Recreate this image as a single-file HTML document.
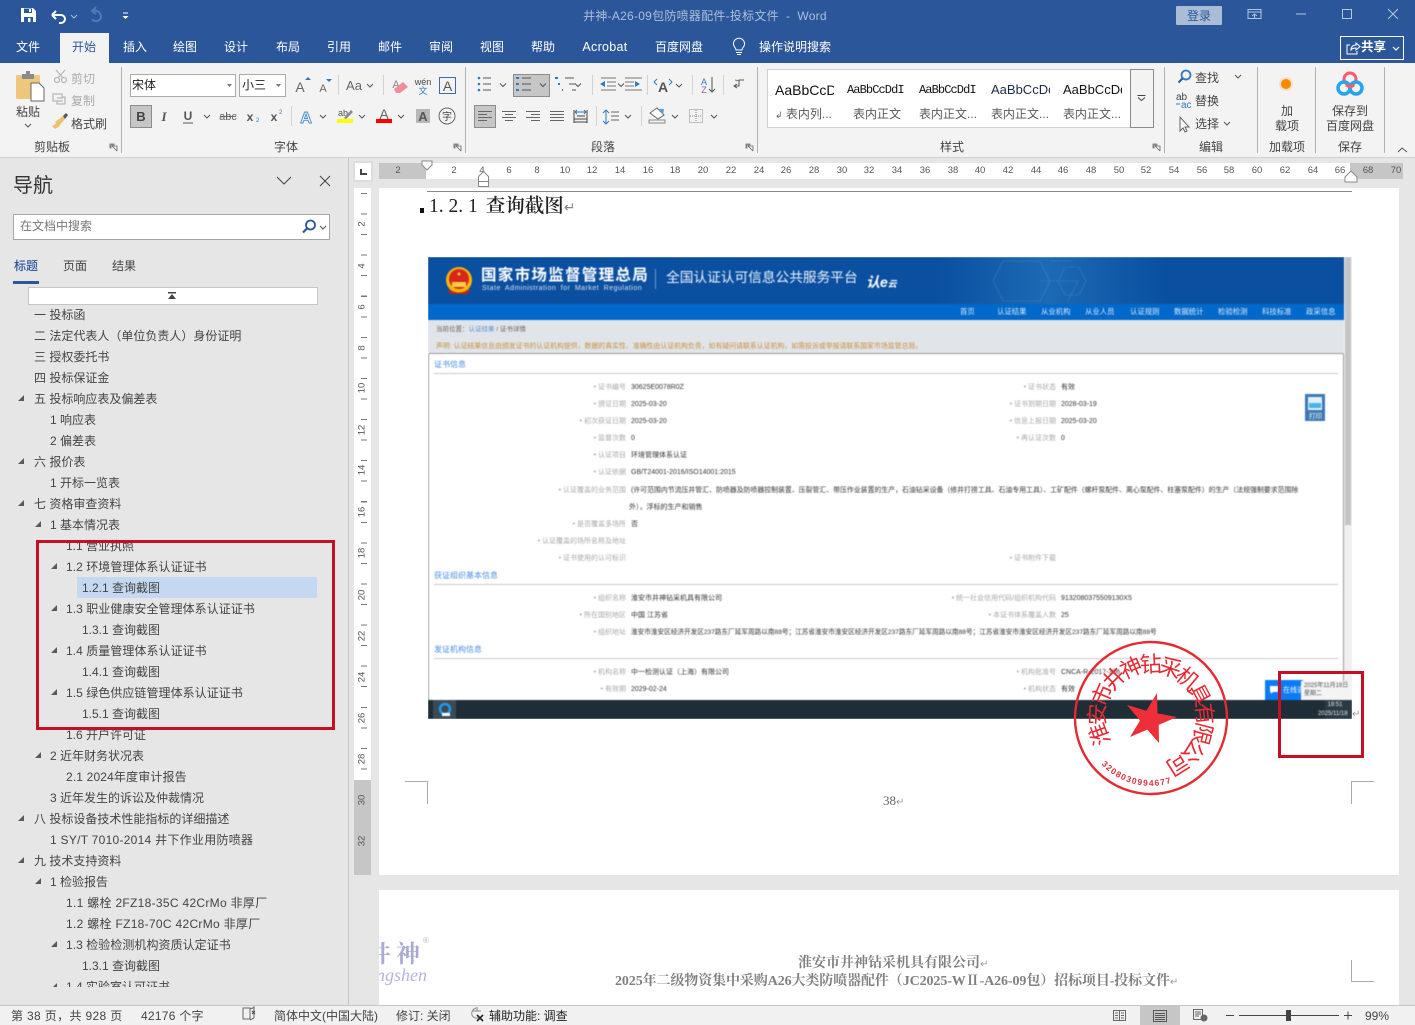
<!DOCTYPE html>
<html lang="zh-CN"><head><meta charset="utf-8"><title>井神-A26-09包防喷器配件-投标文件 - Word</title>
<style>
html,body{margin:0;padding:0;width:1415px;height:1025px;overflow:hidden;background:#e6e6e6}
body{position:relative;font-family:"Liberation Sans","Noto Sans CJK SC",sans-serif;font-size:12px;color:#444}
div,span,svg{position:absolute}
.t{white-space:nowrap;line-height:14px;height:14px}
.c{transform:translateX(-50%)}
.w{color:#fff}
.g{color:#ababab}
.b{background:#c6c6c6;border:1px solid #8c8c8c;box-sizing:border-box}
.sep{width:1px;background:#b1b1b1;top:67px;height:86px}
.ds{width:1px;background:#d2d2d2;height:20px}
.n{white-space:nowrap;line-height:20px;height:20px;font-size:12px;color:#444}
.a{width:6px;height:6px;background:#5a5a5a;clip-path:polygon(100% 0,100% 100%,0 100%)}
.hr span{top:2px;font-size:9.5px;color:#555;line-height:12px;transform:translateX(-50%)}
.vr span{left:0;width:17px;text-align:center;font-size:9.5px;color:#555;line-height:12px;transform:rotate(-90deg)}
.st{overflow:hidden;height:18px;line-height:18px;white-space:nowrap;color:#111}
.sl{color:#595959;font-size:12px;white-space:nowrap;line-height:14px}
#img{left:428px;top:257px;width:924px;height:462px;overflow:hidden;background:#fff}
#imgc{left:0;top:0;width:924px;height:462px;filter:blur(.45px)}
.l,.v{font-size:7px;line-height:9px;height:9px;white-space:nowrap}
.l{color:#a8a8a8;text-align:right}
.v{color:#333}
.h{font-size:8px;line-height:10px;color:#4a8fe0;white-space:nowrap;left:6px}
.hl{left:6px;width:904px;height:1px;background:#c8c8c8}
.m{top:50px;color:#dfeaf6;font-size:7.4px;line-height:10px;white-space:nowrap}
</style></head><body>

<!-- title bar -->
<div style="left:0;top:0;width:1415px;height:63px;background:#2b579a"></div>
<div class="t c" style="left:705px;top:9px;color:#aebfd8;font-size:12px;letter-spacing:.25px">井神-A26-09包防喷器配件-投标文件&nbsp; -&nbsp; Word</div>
<div class="t" style="left:1176px;top:6px;width:46px;height:19px;line-height:20px;background:#aabcd6;color:#2b579a;text-align:center;border-radius:1px">登录</div>
<div class="t w c" style="left:28px;top:40px">文件</div>
<div style="left:60px;top:33px;width:49px;height:30px;background:#f3f3f3"></div>
<div class="t c" style="left:84px;top:40px;color:#2b579a">开始</div>
<div class="t w c" style="left:135px;top:40px">插入</div>
<div class="t w c" style="left:185px;top:40px">绘图</div>
<div class="t w c" style="left:236px;top:40px">设计</div>
<div class="t w c" style="left:288px;top:40px">布局</div>
<div class="t w c" style="left:339px;top:40px">引用</div>
<div class="t w c" style="left:390px;top:40px">邮件</div>
<div class="t w c" style="left:441px;top:40px">审阅</div>
<div class="t w c" style="left:492px;top:40px">视图</div>
<div class="t w c" style="left:543px;top:40px">帮助</div>
<div class="t w c" style="left:605px;top:40px;font-size:12.5px;letter-spacing:.3px">Acrobat</div>
<div class="t w c" style="left:679px;top:40px">百度网盘</div>
<div class="t w c" style="left:795px;top:40px">操作说明搜索</div>
<div style="left:1340px;top:36px;width:62px;height:22px;border:1px solid #fff"></div>
<div class="t w" style="left:1361px;top:40px;font-weight:700;font-size:12.5px">共享</div>

<!-- ribbon -->
<div style="left:0;top:63px;width:1415px;height:94px;background:#f3f3f3"></div>
<div style="left:0;top:157px;width:1415px;height:1px;background:#d0d0d0"></div>
<div class="sep" style="left:121px"></div><div class="sep" style="left:465px"></div><div class="sep" style="left:757px"></div>
<div class="sep" style="left:1164px"></div><div class="sep" style="left:1257px"></div><div class="sep" style="left:1315px"></div><div class="sep" style="left:1384px"></div>

<div class="t c" style="left:28px;top:105px">粘贴</div>
<div class="t g" style="left:71px;top:72px">剪切</div>
<div class="t g" style="left:71px;top:94px">复制</div>
<div class="t" style="left:71px;top:117px">格式刷</div>
<div class="t c" style="left:52px;top:140px">剪贴板</div>
<div class="t c" style="left:286px;top:140px">字体</div>
<div class="t c" style="left:603px;top:140px">段落</div>
<div class="t c" style="left:952px;top:140px">样式</div>
<div class="t c" style="left:1211px;top:140px">编辑</div>
<div class="t c" style="left:1287px;top:140px">加载项</div>
<div class="t c" style="left:1350px;top:140px">保存</div>

<div style="left:130px;top:74px;width:106px;height:23px;background:#fff;border:1px solid #ababab;box-sizing:border-box"></div>
<div class="t" style="left:132px;top:78px;color:#222">宋体</div>
<div style="left:239px;top:74px;width:47px;height:23px;background:#fff;border:1px solid #ababab;box-sizing:border-box"></div>
<div class="t" style="left:242px;top:78px;color:#222">小三</div>
<div class="ds" style="left:338px;top:75px"></div><div class="ds" style="left:383px;top:75px"></div>
<div class="ds" style="left:291px;top:106px"></div>
<div class="ds" style="left:592px;top:75px"></div><div class="ds" style="left:647px;top:75px"></div><div class="ds" style="left:692px;top:75px"></div><div class="ds" style="left:723px;top:75px"></div>
<div class="ds" style="left:596px;top:106px"></div><div class="ds" style="left:641px;top:106px"></div>
<div class="b" style="left:130px;top:105px;width:22px;height:23px"></div>
<div class="b" style="left:513px;top:74px;width:37px;height:23px"></div>
<div class="b" style="left:474px;top:105px;width:22px;height:23px"></div>

<!-- style gallery -->
<div style="left:767px;top:69px;width:364px;height:59px;background:#fff;border:1px solid #d0d0d0;box-sizing:border-box"></div>
<div style="left:1130px;top:69px;width:24px;height:59px;background:#f3f3f3;border:1px solid #8c8c8c;box-sizing:border-box"></div>
<div class="st" style="left:775px;top:81px;width:59px;font-size:14px">AaBbCcD</div>
<div class="st" style="left:847px;top:81px;width:59px;font-size:12px;font-family:'Liberation Mono',monospace;letter-spacing:-.9px">AaBbCcDdI</div>
<div class="st" style="left:919px;top:81px;width:59px;font-size:12px;font-family:'Liberation Mono',monospace;letter-spacing:-.9px">AaBbCcDdI</div>
<div class="st" style="left:991px;top:81px;width:59px;font-size:13px;color:#1b2a44">AaBbCcDd</div>
<div class="st" style="left:1063px;top:81px;width:59px;font-size:13px">AaBbCcDd</div>
<div class="sl" style="left:775px;top:107px"><span style="position:static;font-size:9px">↲</span> 表内列...</div>
<div class="sl" style="left:853px;top:107px">表内正文</div>
<div class="sl" style="left:919px;top:107px">表内正文...</div>
<div class="sl" style="left:991px;top:107px">表内正文...</div>
<div class="sl" style="left:1063px;top:107px">表内正文...</div>

<div class="t" style="left:1195px;top:71px">查找</div>
<div class="t" style="left:1195px;top:94px">替换</div>
<div class="t" style="left:1195px;top:117px">选择</div>
<div class="t c" style="left:1287px;top:104px">加</div>
<div class="t c" style="left:1287px;top:119px">载项</div>
<div class="t c" style="left:1350px;top:104px">保存到</div>
<div class="t c" style="left:1350px;top:119px">百度网盘</div>

<!-- ribbon + title icons -->
<svg style="left:0;top:0" width="1415" height="160" viewBox="0 0 1415 160" fill="none">
<path d="M21 8h12l3 3v11H21z" fill="#fff"/><path d="M24 8.5h8v4.500h-8zM24 17h9v5h-9z" fill="#2b579a"/><rect x="29" y="9" width="2" height="3" fill="#fff"/><rect x="28" y="18" width="2.500" height="4" fill="#fff"/>
<path d="M52 15l4-4M52 15l4 4M52 15h9a4 4 0 0 1 0 8h-2" stroke="#fff" stroke-width="2"/>
<path d="M71 15l3 3 3-3" stroke="#a9bcd6"/>
<path d="M96 8l-4 4 4 3M92 12c5-2 9 2 9 6a5 5 0 0 1-9 2" stroke="#5279b1" stroke-width="2" transform="translate(0 -1)"/>
<path d="M123 13h5" stroke="#fff"/><path d="M122.500 16h6l-3 3z" fill="#fff"/>
<g stroke="#b4c6de" stroke-width="1"><path d="M1248 9.500h13v9h-13zM1248 12h13M1252 16l2.500-2 2.500 2M1254.500 14v5"/><path d="M1296 14h10"/><rect x="1342.500" y="9.500" width="9" height="9"/><path d="M1388 9l10 10M1398 9l-10 10"/></g>
<path d="M734 46a5.500 5.500 0 1 1 10 0c-1 2-2 2.500-2 4h-6c0-1.500-1-2-2-4zM736 52.500h6M737 54.500h4" stroke="#fff"/>
<path d="M1350 45h-3v9h10v-3M1351 50c0-3 2-5 5-5v-2l4 3.500-4 3.500v-2c-2 0-4 .500-5 2z" stroke="#fff"/>
<path d="M1393 47l3 3 3-3" stroke="#fff" stroke-width="1.200"/>

<rect x="16" y="75" width="24" height="24" rx="1.500" fill="#efc77c"/><path d="M22 74h12v5H22z" fill="#8a8a8a"/><rect x="26" y="71" width="4" height="3" fill="#8a8a8a"/>
<path d="M31 83h8l5 5v13H31z" fill="#fff" stroke="#666"/>
<path d="M25 124l3 3 3-3" stroke="#555"/>
<g stroke="#b8b8b8" stroke-width="1.300"><circle cx="57" cy="80" r="2.500"/><circle cx="64" cy="80" r="2.500"/><path d="M58 78l7-8M63 78l-7-8"/><path d="M53 94h9v3H65v7h-8v-3h-4z"/><path d="M57 98h6M57 101h6"/></g>
<path d="M55 122l8-6 2 3-6 7z" fill="#edc26f"/><path d="M63 116l3-3 2 2-3 4z" fill="#555"/><path d="M52 126l5-3 3 3-5 3z" fill="#edc26f"/>
<path d="M112 146h5v5M110 144h4v1h-3v3h-1zM112 146l5 5" stroke="#666" stroke-width=".8"/>
<path d="M456 146h5v5M454 144h4v1h-3v3h-1zM456 146l5 5" stroke="#666" stroke-width=".8"/>
<path d="M748 146h5v5M746 144h4v1h-3v3h-1zM748 146l5 5" stroke="#666" stroke-width=".8"/>
<path d="M1155 146h5v5M1153 144h4v1h-3v3h-1zM1155 146l5 5" stroke="#666" stroke-width=".8"/>
<path d="M1398 152l4-4 5 4" stroke="#555"/>

<path d="M227 84h5l-2.500 3zM276 84h5l-2.500 3z" fill="#777"/>
<text x="300" y="92" text-anchor="middle" font-size="14" fill="#666" font-family="Liberation Sans">A</text><path d="M304 79h6l-3-3z" fill="#2f7bbd" transform="translate(1 1)"/>
<text x="323" y="92" text-anchor="middle" font-size="11" fill="#666" font-family="Liberation Sans">A</text><path d="M326 79h6l-3 3z" fill="#2f7bbd"/>
<text x="354" y="90" text-anchor="middle" font-size="13" fill="#666" font-family="Liberation Sans">Aa</text><path d="M367 84l3 3 3-3" stroke="#555"/>
<text x="396" y="88" text-anchor="middle" font-size="11" fill="#888" font-family="Liberation Sans">A</text><path d="M394 89l9-7 5 5-8 6h-4z" fill="#ef8d9a"/>
<text x="423" y="85" text-anchor="middle" font-size="9" fill="#444" font-family="Liberation Sans">wén</text><text x="423" y="94" text-anchor="middle" font-size="9" fill="#2d79b8" font-family="Noto Sans CJK SC">文</text>
<rect x="439.500" y="77.500" width="16" height="16" stroke="#3a6ea5"/><text x="447.500" y="91" text-anchor="middle" font-size="14" fill="#555" font-family="Liberation Sans">A</text>

<text x="141" y="121" text-anchor="middle" font-size="13" font-weight="700" fill="#444" font-family="Liberation Sans">B</text>
<text x="164" y="121" text-anchor="middle" font-size="13" font-style="italic" font-weight="700" fill="#555" font-family="Liberation Serif">I</text>
<text x="188" y="120" text-anchor="middle" font-size="12" font-weight="700" fill="#555" font-family="Liberation Sans">U</text><path d="M183 123h10" stroke="#555"/><path d="M204 115l3 3 3-3" stroke="#555"/>
<text x="228" y="120" text-anchor="middle" font-size="11" fill="#666" font-family="Liberation Sans">abc</text><path d="M220 116.500h16" stroke="#666"/>
<text x="250" y="121" text-anchor="middle" font-size="12" font-weight="700" fill="#555" font-family="Liberation Sans">x</text><text x="256" y="122" font-size="6" fill="#2f7bbd" font-family="Liberation Sans">2</text>
<text x="274" y="121" text-anchor="middle" font-size="12" font-weight="700" fill="#555" font-family="Liberation Sans">x</text><text x="279" y="114" font-size="6" fill="#2f7bbd" font-family="Liberation Sans">2</text>
<text x="306" y="123" text-anchor="middle" font-size="16" font-weight="700" fill="#fff" stroke="#4b8fcf" stroke-width="1" font-family="Liberation Sans">A</text><path d="M320 115l3 3 3-3" stroke="#555"/>
<text x="343" y="116" text-anchor="middle" font-size="9" fill="#555" font-family="Liberation Sans">ab</text><path d="M344 118l7-8 2 2-7 7z" fill="#888"/><rect x="337" y="119" width="16" height="4" fill="#ffff00"/><path d="M359 115l3 3 3-3" stroke="#555"/>
<text x="384" y="119" text-anchor="middle" font-size="14" fill="#666" font-family="Liberation Sans">A</text><rect x="376" y="119" width="16" height="4" fill="#f00"/><path d="M398 115l3 3 3-3" stroke="#555"/>
<rect x="416" y="109" width="14" height="14" fill="#b8b8b8"/><text x="423" y="121" text-anchor="middle" font-size="13" font-weight="700" fill="#555" font-family="Liberation Sans">A</text>
<circle cx="447" cy="116" r="8" stroke="#666"/><text x="447" y="120" text-anchor="middle" font-size="10" fill="#444" font-family="Noto Sans CJK SC">字</text>

<g fill="#2f7bbd"><circle cx="479" cy="78" r="1.300"/><circle cx="479" cy="84" r="1.300"/><circle cx="479" cy="90" r="1.300"/></g>
<path d="M483 78h8M483 84h8M483 90h8M522 78h9M522 84h9M522 90h9M565 78h9M569 84h6M572 90h4" stroke="#555"/>
<path d="M500 83.500l3 3 3-3M540 83.500l3 3 3-3M575 83.500l3 3 3-3M618 83.500l3 3 3-3" stroke="#555"/>
<path d="M516 78h3M516 84h3M516 90h3M555 78h3M558 84h2M562 90h1" stroke="#2f7bbd" stroke-width="2"/>
<path d="M601 78h15M607 82h9M607 86h9M601 90h15M625 78h17M625 82h9M625 86h9M625 90h17" stroke="#777"/>
<path d="M600 84l5-3v6zM640 84l-5-3v6z" fill="#2f7bbd"/>
<text x="663" y="92" text-anchor="middle" font-size="14" font-weight="700" fill="#555" font-family="Liberation Sans">A</text><path d="M657 79l-3 3 3 3M669 79l3 3-3 3" stroke="#2f7bbd"/><path d="M676 84l3 3 3-3" stroke="#555"/>
<text x="704" y="85" text-anchor="middle" font-size="9" fill="#2f7bbd" font-family="Liberation Sans">A</text><text x="704" y="93" text-anchor="middle" font-size="9" fill="#8e5cb0" font-family="Liberation Sans">Z</text><path d="M712 77v15M709 89l3 3 3-3" stroke="#555"/>
<path d="M744 80h-5v6h-5M737 84l-3 2 3 2" stroke="#555"/><path d="M735 80l4 1" stroke="#777"/>

<path d="M478 111h14M478 114h9M478 117h14M478 120h9M502 111h14M505 114h8M502 117h14M505 120h8M526 111h14M531 114h9M526 117h14M531 120h9M550 111h14M550 114h14M550 117h14M550 120h14" stroke="#666" transform="translate(0 .500)"/>
<path d="M574 110v13M587 110v13M574 122h13M574 119h13M577 116h8" stroke="#444"/><path d="M575 112h11M575 112l2-2M575 112l2 2M586 112l-2-2M586 112l-2 2" stroke="#2f7bbd"/>
<path d="M606 111v12M603 113l3-3 3 3M603 121l3 3 3-3" stroke="#2f7bbd"/><path d="M611 112h8M611 116h8M611 120h8" stroke="#666"/><path d="M625 115l3 3 3-3M672 115l3 3 3-3M711 115l3 3 3-3" stroke="#555"/>
<path d="M650 113l7-5 7 7-6 4z" fill="#fff" stroke="#666"/><path d="M658 109h6l-1 6z" fill="#5f9cd0"/><path d="M649 120h16v3h-16z" stroke="#888"/>
<rect x="689.500" y="109.500" width="13" height="13" stroke="#888" stroke-dasharray="1 1"/><path d="M696 110v12M690 116h12" stroke="#888" stroke-dasharray="1 1"/>

<path d="M1137.500 95.500h8M1138 97.500l3.500 3 3.500-3" stroke="#444"/>

<circle cx="1186" cy="75" r="4.500" stroke="#2f7bbd" stroke-width="1.800"/><path d="M1182.500 78.500l-4 4" stroke="#2b579a" stroke-width="2"/><path d="M1235 75l3 3 3-3" stroke="#555"/>
<text x="1176" y="100" font-size="10" fill="#444" font-family="Liberation Sans">ab</text><text x="1181" y="108" font-size="10" fill="#2f7bbd" font-family="Liberation Sans">ac</text><path d="M1176 104h4" stroke="#2f7bbd"/>
<path d="M1180 117v14l3-3 2 4 2-1-2-4h4z" stroke="#666" fill="#f8f8f8"/><path d="M1224 122l3 3 3-3" stroke="#555"/>
<circle cx="1286" cy="84" r="5" fill="#f98a00"/><circle cx="1286" cy="84" r="7" fill="#f98a00" opacity=".18"/>
<circle cx="1350" cy="79" r="6" stroke="#ff5a6e" stroke-width="3"/><circle cx="1344" cy="88" r="6" stroke="#25a5ee" stroke-width="3.500"/><circle cx="1356" cy="88" r="6" stroke="#25a5ee" stroke-width="3.500"/><path d="M1346 85c3 2 6 2 8 0" stroke="#ff5a6e" stroke-width="3"/>
</svg>

<!-- navigation pane -->
<div style="left:348px;top:158px;width:1px;height:847px;background:#c6c6c6"></div>
<div class="t" style="left:13px;top:174px;font-size:20px;line-height:24px;height:24px;color:#333">导航</div>
<svg style="left:270px;top:170px" width="70" height="24" fill="none" stroke="#444"><path d="M7 7l7 7 7-7"/><path d="M50 6l10 10M60 6L50 16"/></svg>
<div style="left:13px;top:214px;width:317px;height:26px;background:#fff;border:1px solid #a6a6a6;box-sizing:border-box"></div>
<div class="t" style="left:20px;top:219px;color:#777">在文档中搜索</div>
<svg style="left:300px;top:218px" width="28" height="18" fill="none"><circle cx="10.500" cy="7" r="4.500" stroke="#2b579a" stroke-width="1.800"/><path d="M7 10.500L3 14.500" stroke="#2b579a" stroke-width="2.200"/><path d="M20 8l3 3 3-3" stroke="#555"/></svg>
<div class="t" style="left:14px;top:259px;color:#2b579a;font-weight:500">标题</div>
<div style="left:13px;top:281px;width:26px;height:3px;background:#2b579a"></div>
<div class="t" style="left:63px;top:259px">页面</div>
<div class="t" style="left:112px;top:259px">结果</div>
<div style="left:28px;top:287px;width:290px;height:18px;background:#fff;border:1px solid #c6c6c6;box-sizing:border-box"></div>
<svg style="left:168px;top:292px" width="8" height="8"><path d="M0 0h8v1.500H0zM4 2l4 5H0z" fill="#444"/></svg>

<div style="left:77px;top:577px;width:240px;height:21px;background:#c5d8f1"></div>
<div id="nav" style="left:0;top:306px;width:348px;height:681px;overflow:hidden">
<div class="n" style="left:34px;top:-1px">一 投标函</div>
<div class="n" style="left:34px;top:20px">二 法定代表人（单位负责人）身份证明</div>
<div class="n" style="left:34px;top:41px">三 授权委托书</div>
<div class="n" style="left:34px;top:62px">四 投标保证金</div>
<div class="a" style="left:18px;top:89px"></div><div class="n" style="left:34px;top:83px">五 投标响应表及偏差表</div>
<div class="n" style="left:50px;top:104px">1 响应表</div>
<div class="n" style="left:50px;top:125px">2 偏差表</div>
<div class="a" style="left:18px;top:152px"></div><div class="n" style="left:34px;top:146px">六 报价表</div>
<div class="n" style="left:50px;top:167px">1 开标一览表</div>
<div class="a" style="left:18px;top:194px"></div><div class="n" style="left:34px;top:188px">七 资格审查资料</div>
<div class="a" style="left:35px;top:215px"></div><div class="n" style="left:50px;top:209px">1 基本情况表</div>
<div class="n" style="left:66px;top:230px">1.1 营业执照</div>
<div class="a" style="left:51px;top:257px"></div><div class="n" style="left:66px;top:251px;letter-spacing:.05px">1.2 环境管理体系认证证书</div>
<div class="n" style="left:82px;top:272px">1.2.1 查询截图</div>
<div class="a" style="left:51px;top:299px"></div><div class="n" style="left:66px;top:293px;letter-spacing:.05px">1.3 职业健康安全管理体系认证证书</div>
<div class="n" style="left:82px;top:314px">1.3.1 查询截图</div>
<div class="a" style="left:51px;top:341px"></div><div class="n" style="left:66px;top:335px;letter-spacing:.05px">1.4 质量管理体系认证证书</div>
<div class="n" style="left:82px;top:356px">1.4.1 查询截图</div>
<div class="a" style="left:51px;top:383px"></div><div class="n" style="left:66px;top:377px;letter-spacing:.05px">1.5 绿色供应链管理体系认证证书</div>
<div class="n" style="left:82px;top:398px">1.5.1 查询截图</div>
<div class="n" style="left:66px;top:419px">1.6 开户许可证</div>
<div class="a" style="left:35px;top:446px"></div><div class="n" style="left:50px;top:440px">2 近年财务状况表</div>
<div class="n" style="left:66px;top:461px;letter-spacing:.15px">2.1 2024年度审计报告</div>
<div class="n" style="left:50px;top:482px">3 近年发生的诉讼及仲裁情况</div>
<div class="a" style="left:18px;top:509px"></div><div class="n" style="left:34px;top:503px">八 投标设备技术性能指标的详细描述</div>
<div class="n" style="left:50px;top:524px;letter-spacing:.27px">1 SY/T 7010-2014 井下作业用防喷器</div>
<div class="a" style="left:18px;top:551px"></div><div class="n" style="left:34px;top:545px">九 技术支持资料</div>
<div class="a" style="left:35px;top:572px"></div><div class="n" style="left:50px;top:566px">1 检验报告</div>
<div class="n" style="left:66px;top:587px;letter-spacing:.3px">1.1 螺栓 2FZ18-35C 42CrMo 非厚厂</div>
<div class="n" style="left:66px;top:608px;letter-spacing:.3px">1.2 螺栓 FZ18-70C 42CrMo 非厚厂</div>
<div class="a" style="left:51px;top:635px"></div><div class="n" style="left:66px;top:629px;letter-spacing:.05px">1.3 检验检测机构资质认定证书</div>
<div class="n" style="left:82px;top:650px">1.3.1 查询截图</div>
<div class="a" style="left:51px;top:677px"></div><div class="n" style="left:66px;top:671px">1.4 实验室认可证书</div>
</div>

<!-- rulers -->
<div style="left:353px;top:161px;width:20px;height:21px;background:#fff;border:2px solid #dcdcdc;box-sizing:border-box"></div>
<svg style="left:360px;top:168px" width="9" height="8"><path d="M1 1v5h6" stroke="#444" stroke-width="2" fill="none"/></svg>
<div class="hr" style="left:379px;top:163px;width:1024px;height:16px;background:#c6c6c6">
<div style="left:47px;top:0;width:924px;height:16px;background:#fff"></div>
<span style="left:19px">2</span><span style="left:75px">2</span><span style="left:103px">4</span><span style="left:130px">6</span><span style="left:158px">8</span><span style="left:186px">10</span><span style="left:213px">12</span><span style="left:241px">14</span><span style="left:269px">16</span><span style="left:296px">18</span><span style="left:324px">20</span><span style="left:352px">22</span><span style="left:380px">24</span><span style="left:407px">26</span><span style="left:435px">28</span><span style="left:463px">30</span><span style="left:490px">32</span><span style="left:518px">34</span><span style="left:546px">36</span><span style="left:574px">38</span><span style="left:601px">40</span><span style="left:629px">42</span><span style="left:657px">44</span><span style="left:684px">46</span><span style="left:712px">48</span><span style="left:740px">50</span><span style="left:767px">52</span><span style="left:795px">54</span><span style="left:823px">56</span><span style="left:850px">58</span><span style="left:878px">60</span><span style="left:906px">62</span><span style="left:934px">64</span><span style="left:961px">66</span><span style="left:989px">68</span><span style="left:1017px">70</span>
</div>
<svg style="left:420px;top:158px" width="70" height="30"><path d="M2 3h10v4l-5 5-5-5z" fill="#fff" stroke="#888"/><path d="M58.500 18.500l5-5 5 5v5h-10zM58.500 23.500h10v5h-10z" fill="#fff" stroke="#888"/></svg>
<svg style="left:1344px;top:170px" width="14" height="14"><path d="M1 7l6-6 6 6v5H1z" fill="#fff" stroke="#888"/></svg>

<div class="vr" style="left:354px;top:188px;width:17px;height:687px;background:#c6c6c6">
<div style="left:0;top:0;width:17px;height:592px;background:#fff"></div>
<div style="left:7px;top:5px;width:6px;height:580px;background:repeating-linear-gradient(180deg,#777 0 1px,transparent 1px 20.55px)"></div>
<span style="top:30px;background:#fff">2</span><span style="top:72px;background:#fff">4</span><span style="top:113px;background:#fff">6</span><span style="top:154px;background:#fff">8</span><span style="top:194px;background:#fff">10</span><span style="top:236px;background:#fff">12</span><span style="top:276px;background:#fff">14</span><span style="top:318px;background:#fff">16</span><span style="top:359px;background:#fff">18</span><span style="top:401px;background:#fff">20</span><span style="top:442px;background:#fff">22</span><span style="top:483px;background:#fff">24</span><span style="top:524px;background:#fff">26</span><span style="top:565px;background:#fff">28</span><span style="top:606px">30</span><span style="top:647px">32</span>
</div>

<!-- page 1 -->
<div style="left:379px;top:188px;width:1020px;height:687px;background:#fff"></div>
<div style="left:427px;top:191px;width:925px;height:1px;background:#888"></div>
<div style="left:420px;top:208px;width:4px;height:5px;background:#111"></div>
<div class="t" style="left:429px;top:195px;height:24px;line-height:24px;font-family:'Liberation Serif','Noto Serif CJK SC',serif;font-size:19.500px;font-weight:400;color:#222">1. 2. 1<span style="position:static;margin-left:8px;font-weight:600">查询截图</span><span style="position:static;color:#888;font-size:14px">↵</span></div>

<div id="img"><div id="imgc">
<div style="left:0;top:0;width:924px;height:47px;background:linear-gradient(90deg,#0a4fa0 0%,#0a4fa0 55%,#1d6ab4 67%,#0a4fa0 80%,#0a4fa0 100%)"></div>
<div style="left:0;top:47px;width:924px;height:16px;background:#0069cb"></div>
<div style="left:0;top:63px;width:924px;height:33px;background:#e1e5ea"></div>
<svg style="left:560px;top:0" width="110" height="47" fill="none" stroke="#6fa7d8" stroke-width=".6" opacity=".4"><path d="M15 4h37l10 20-10 20h-37L5 24zM52 24h38l-10 20M62 4l22 0M70 24l7-14 14 0 7 14-7 14-14 0z"/></svg>
<svg style="left:16px;top:9px" width="30" height="30"><circle cx="15" cy="14" r="13" fill="#f4b800"/><circle cx="15" cy="13" r="10" fill="#d9261c"/><path d="M8 16h14v5H8z" fill="#f4cf46"/><path d="M4 22c6 6 16 6 22 0l-2 6H6z" fill="#c4231a"/><circle cx="15" cy="8" r="1.500" fill="#f4cf46"/></svg>
<div class="t" style="left:53px;top:9px;font-size:15.500px;height:20px;line-height:20px;font-weight:700;letter-spacing:1.3px;color:#fff">国家市场监督管理总局</div>
<div class="t" style="left:54px;top:27px;font-size:7px;height:10px;line-height:10px;letter-spacing:.5px;word-spacing:2px;color:#d6e4f4">State Administration for Market Regulation</div>
<div style="left:227px;top:12px;width:1px;height:20px;background:#6b9acb"></div>
<div class="t" style="left:238px;top:11px;font-size:13.700px;height:20px;line-height:20px;color:#eef4fb">全国认证认可信息公共服务平台</div>
<div class="t" style="left:438px;top:15px;font-size:14px;height:20px;line-height:20px;color:#fff;font-weight:700;font-style:italic">认e<span style="position:static;font-size:9px">云</span></div>
<div class="m" style="left:532px">首页</div><div class="m" style="left:569px">认证结果</div><div class="m" style="left:613px">从业机构</div><div class="m" style="left:657px">从业人员</div><div class="m" style="left:702px">认证规则</div><div class="m" style="left:746px">数据统计</div><div class="m" style="left:790px">检验检测</div><div class="m" style="left:834px">科技标准</div><div class="m" style="left:878px">政采信息</div>
<div class="v" style="left:8px;top:68px;font-size:6.500px;color:#666">当前位置：<span style="position:static;color:#5b8fd0">认证结果</span> / 证书详情</div>
<div class="v" style="left:8px;top:85px;font-size:6.900px;color:#c8913c">声明: 认证结果信息由颁发证书的认证机构提供，数据的真实性、准确性由认证机构负责，如有疑问请联系认证机构，如需投诉或举报请联系国家市场监管总局。</div>

<div style="left:0;top:96px;width:916px;height:348px;background:#fff;border:1px solid #9a9a9a;border-bottom:0;border-radius:2px 2px 0 0;box-sizing:border-box"></div>
<div style="left:916px;top:0;width:8px;height:462px;background:#f0f0f0"></div>
<div style="left:917px;top:0;width:6px;height:268px;background:#c4c4c4"></div>
<div class="h" style="top:103px">证书信息</div><div class="hl" style="top:116px"></div>
<div class="l" style="left:100px;width:98px;top:126px">• 证书编号</div><div class="v" style="left:203px;top:126px">30625E0078R0Z</div>
<div class="l" style="left:100px;width:98px;top:143px">• 颁证日期</div><div class="v" style="left:203px;top:143px">2025-03-20</div>
<div class="l" style="left:100px;width:98px;top:160px">• 初次获证日期</div><div class="v" style="left:203px;top:160px">2025-03-20</div>
<div class="l" style="left:100px;width:98px;top:177px">• 监督次数</div><div class="v" style="left:203px;top:177px">0</div>
<div class="l" style="left:100px;width:98px;top:194px">• 认证项目</div><div class="v" style="left:203px;top:194px">环境管理体系认证</div>
<div class="l" style="left:100px;width:98px;top:211px">• 认证依据</div><div class="v" style="left:203px;top:211px">GB/T24001-2016/ISO14001:2015</div>
<div class="l" style="left:100px;width:98px;top:229px">• 认证覆盖的业务范围</div><div class="v" style="left:203px;top:229px;width:670px;overflow:hidden;font-size:6.900px">(许可范围内节流压井管汇、防喷器及防喷器控制装置、压裂管汇、带压作业装置的生产，石油钻采设备（修井打捞工具、石油专用工具）、工矿配件（螺杆泵配件、离心泵配件、柱塞泵配件）的生产（法规强制要求范围除</div>
<div class="v" style="left:201px;top:246px">外），浮标的生产和销售</div>
<div class="l" style="left:100px;width:98px;top:263px">• 是否覆盖多场所</div><div class="v" style="left:203px;top:263px">否</div>
<div class="l" style="left:60px;width:138px;top:280px">• 认证覆盖的场所名称及地址</div>
<div class="l" style="left:100px;width:98px;top:297px">• 证书使用的认可标识</div>
<div class="h" style="top:314px">获证组织基本信息</div><div class="hl" style="top:327px"></div>
<div class="l" style="left:100px;width:98px;top:337px">• 组织名称</div><div class="v" style="left:203px;top:337px">淮安市井神钻采机具有限公司</div>
<div class="l" style="left:100px;width:98px;top:354px">• 所在国别地区</div><div class="v" style="left:203px;top:354px">中国 江苏省</div>
<div class="l" style="left:100px;width:98px;top:371px">• 组织地址</div><div class="v" style="left:203px;top:371px;font-size:6.630px">淮安市淮安区经济开发区237路东厂延军周路以南88号；江苏省淮安市淮安区经济开发区237路东厂延军周路以南88号；江苏省淮安市淮安区经济开发区237路东厂延军周路以南88号</div>
<div class="h" style="top:388px">发证机构信息</div><div class="hl" style="top:401px"></div>
<div class="l" style="left:100px;width:98px;top:411px">• 机构名称</div><div class="v" style="left:203px;top:411px">中一检测认证（上海）有限公司</div>
<div class="l" style="left:100px;width:98px;top:428px">• 有效期</div><div class="v" style="left:203px;top:428px">2029-02-24</div>

<div class="l" style="left:530px;width:98px;top:126px">• 证书状态</div><div class="v" style="left:633px;top:126px">有效</div>
<div class="l" style="left:530px;width:98px;top:143px">• 证书到期日期</div><div class="v" style="left:633px;top:143px">2028-03-19</div>
<div class="l" style="left:530px;width:98px;top:160px">• 信息上报日期</div><div class="v" style="left:633px;top:160px">2025-03-20</div>
<div class="l" style="left:530px;width:98px;top:177px">• 再认证次数</div><div class="v" style="left:633px;top:177px">0</div>
<div class="l" style="left:530px;width:98px;top:297px">• 证书附件下载</div>
<div class="l" style="left:470px;width:158px;top:337px">• 统一社会信用代码/组织机构代码</div><div class="v" style="left:633px;top:337px">9132080375509130X5</div>
<div class="l" style="left:530px;width:98px;top:354px">• 本证书体系覆盖人数</div><div class="v" style="left:633px;top:354px">25</div>
<div class="l" style="left:530px;width:98px;top:411px">• 机构批准号</div><div class="v" style="left:633px;top:411px">CNCA-R-2017-306</div>
<div class="l" style="left:530px;width:98px;top:428px">• 机构状态</div><div class="v" style="left:633px;top:428px">有效</div>

<div style="left:877px;top:137px;width:20px;height:27px;background:#3d7ab5"></div>
<div style="left:880px;top:140px;width:14px;height:13px;background:#dff0fb"></div>
<div style="left:881px;top:146px;width:12px;height:5px;background:#4cb3e6"></div>
<div class="v" style="left:881px;top:155px;color:#fff;font-size:6.500px">打印</div>

<div style="left:0;top:443px;width:924px;height:19px;background:#1f2d36"></div>
<div style="left:5px;top:443px;width:23px;height:19px;background:#3b4a54"></div>
<svg style="left:9px;top:445px" width="16" height="15"><circle cx="8" cy="7" r="5" fill="none" stroke="#1e9bf0" stroke-width="2.500"/><path d="M5 11h8v3H5z" fill="#fff"/></svg>
<div style="left:837px;top:423px;width:38px;height:20px;background:#0a7cf5"></div>
<div class="v" style="left:855px;top:429px;color:#fff;font-size:7px">在线咨询</div>
<svg style="left:841px;top:428px" width="10" height="10"><path d="M1 1h8v6H4L2 9V7H1z" fill="#fff"/></svg>
<div style="left:873px;top:424px;width:51px;height:19px;background:#f4f4f4"></div>
<div class="v" style="left:876px;top:425px;font-size:6px;color:#555">2025年11月18日</div>
<div class="v" style="left:876px;top:433px;font-size:6px;color:#555">星期二</div>
<div style="left:897px;top:443px;width:27px;height:19px;background:#2b3a44"></div>
<div class="v" style="left:896px;top:444px;width:22px;text-align:center;font-size:6px;color:#e8e8e8">18:51</div>
<div class="v" style="left:890px;top:453px;font-size:6px;color:#e8e8e8">2025/11/18</div>
</div></div>
<div class="t" style="left:1352px;top:708px;color:#999;font-size:10px">↵</div>

<!-- crop marks -->
<div style="left:405px;top:781px;width:23px;height:1px;background:#aaa"></div><div style="left:427px;top:781px;width:1px;height:23px;background:#aaa"></div>
<div style="left:1351px;top:781px;width:23px;height:1px;background:#aaa"></div><div style="left:1351px;top:781px;width:1px;height:23px;background:#aaa"></div>
<div class="t" style="left:883px;top:794px;color:#666;font-family:'Liberation Serif',serif;font-size:13px">38<span style="position:static;color:#999;font-size:10px">↵</span></div>

<!-- page 2 -->
<div style="left:379px;top:890px;width:1020px;height:115px;background:#fff;overflow:hidden">
<div class="t" style="left:-12px;top:47px;height:30px;line-height:30px;font-family:'Noto Serif CJK SC',serif;font-size:24px;letter-spacing:5px;font-weight:700;color:#a9a9d6">井神</div>
<div class="t" style="left:44px;top:44px;font-size:8px;color:#b5b5d8">®</div>
<div class="t" style="left:-8px;top:75px;height:20px;line-height:20px;font-family:'Liberation Serif',serif;font-style:italic;font-size:18px;color:#b5b5d8">ingshen</div>
<div class="t" style="left:419px;top:65px;height:18px;line-height:18px;font-family:'Liberation Serif','Noto Serif CJK SC',serif;font-size:14px;font-weight:700;color:#808080">淮安市井神钻采机具有限公司<span style="position:static;font-weight:400;font-size:10px;color:#999">↵</span></div>
<div class="t" style="left:236px;top:83px;height:18px;line-height:18px;font-family:'Liberation Serif','Noto Serif CJK SC',serif;font-size:14px;font-weight:700;color:#808080;letter-spacing:-.1px">2025年二级物资集中采购A26大类防喷器配件（JC2025-WⅡ-A26-09包）招标项目-投标文件<span style="position:static;font-weight:400;font-size:10px;color:#999">↵</span></div>
<div style="left:972px;top:70px;width:1px;height:22px;background:#aaa"></div><div style="left:972px;top:91px;width:23px;height:1px;background:#aaa"></div>
</div>

<!-- seal -->
<svg style="left:1060px;top:630px" width="180" height="180" viewBox="1060 630 180 180" fill="none">
<defs><path id="sa" d="M1111.400 741.500A46 46 0 1 1 1162.900 762.400"/><path id="sb" d="M1101.300 764.400A68 68 0 0 0 1194.700 770"/></defs>
<circle cx="1151" cy="718" r="76" stroke="#e52a33" stroke-width="2.400"/>
<text font-family="'Noto Sans CJK SC',sans-serif" font-size="22" fill="#e52a33" letter-spacing="-4.800"><textPath href="#sa">淮安市井神钻采机具有限公司</textPath></text>
<text font-family="'Liberation Sans',sans-serif" font-size="8.500" font-weight="700" fill="#e0303a" letter-spacing="1.200"><textPath href="#sb">3208030994677</textPath></text>
<path d="M1157 693L1157.500 713.400L1177 717L1158.700 724.900L1159 743L1147.300 729.600L1130 737L1140 720.500L1127 705L1146.400 710.700Z" fill="#ee2e38"/>
</svg>

<!-- red boxes -->
<div style="left:36px;top:540px;width:293px;height:184px;border:3px solid #c50f24"></div>
<div style="left:1278px;top:671px;width:80px;height:81px;border:3px solid #c50f24"></div>

<!-- status bar -->
<div style="left:0;top:1005px;width:1415px;height:20px;background:#f1f1f1;border-top:1px solid #c6c6c6;box-sizing:border-box"></div>
<div class="t" style="left:11px;top:1009px;letter-spacing:.35px">第 38 页，共 928 页</div>
<div class="t" style="left:141px;top:1009px;letter-spacing:.25px">42176 个字</div>
<div class="t" style="left:274px;top:1009px">简体中文(中国大陆)</div>
<div class="t" style="left:396px;top:1009px">修订: 关闭</div>
<div class="t" style="left:489px;top:1009px;color:#222">辅助功能: 调查</div>
<div style="left:1140px;top:1006px;width:40px;height:19px;background:#c6c6c6"></div>
<div class="t" style="left:1365px;top:1009px">99%</div>
<svg style="left:0;top:1005px" width="1415" height="20" fill="none" stroke="#666">
<path d="M243 3h7v11h-7zM250 3c2 1 3 0 4-1v11l-4 2"/><path d="M252 6l3 3M255 6l-3 3" stroke="#444"/>
<path d="M476 3c-3 1-5 4-4 7s5 4 7 2" stroke="#888"/><path d="M477 2v4M473 6h8" stroke="#888"/><path d="M477 10l6 6M483 10l-6 6" stroke="#222" stroke-width="1.600"/>
<path d="M1113.500 5.500h6v10h-6zM1119.500 5.500h6v10h-6zM1115 8h3M1115 10.500h3M1115 13h3M1121 8h3M1121 10.500h3M1121 13h3"/>
<path d="M1153.500 5.500h13v11h-13zM1155 8.500h10M1155 10.500h10M1155 12.500h10M1155 14.500h10" stroke="#555"/>
<path d="M1193.500 4.500h9v10h-9zM1195 7h6M1195 9h6M1195 11h4"/><circle cx="1204" cy="13" r="3.500" fill="#666" stroke="none"/>
<path d="M1226 10.500h8M1239 10.500h100M1344 10.500h8M1348 6.500v8" stroke="#444"/>
<rect x="1286" y="5" width="5" height="11" fill="#444" stroke="none"/>
</svg>
</body></html>
